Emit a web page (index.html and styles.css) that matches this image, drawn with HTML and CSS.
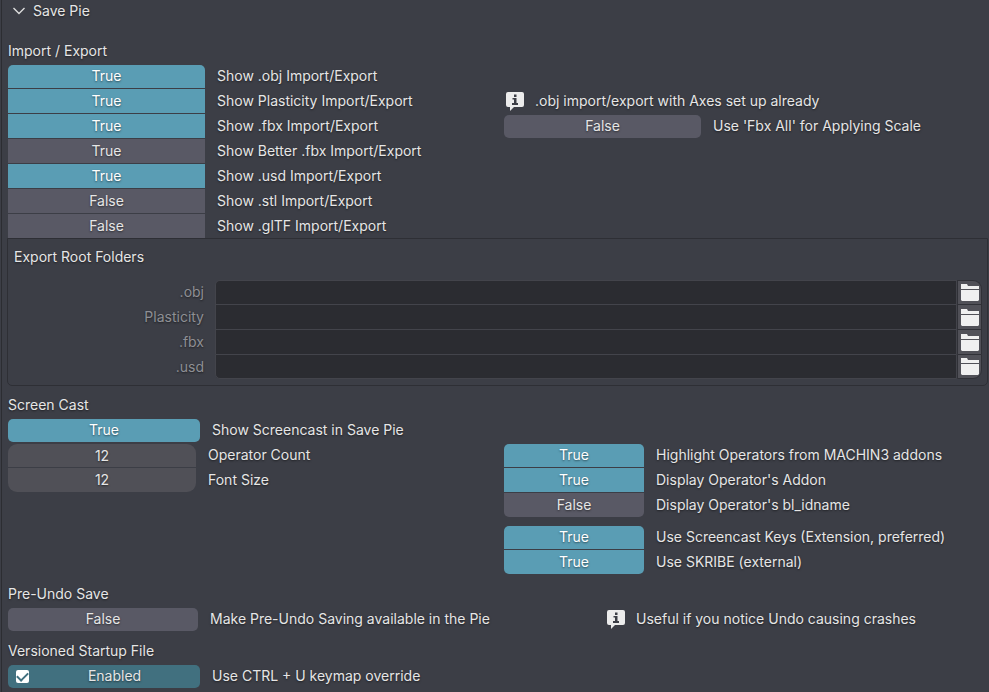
FILE: index.html
```html
<!DOCTYPE html>
<html lang="en">
<head>
<meta charset="utf-8">
<title>Save Pie</title>
<link rel="stylesheet" href="styles.css">
</head>
<body>
<svg class="defs" aria-hidden="true">
  <symbol id="info" viewBox="0 0 18 19">
    <path fill="#ececec" fill-rule="evenodd" d="M2 0H16Q18 0 18 2V13Q18 15 16 15H8L4 19V15H2Q0 15 0 13V2Q0 0 2 0ZM8 2.5V5H10.5V2.5ZM6.5 6V7.5H8V11H6V13H12V11H10.5V6Z"/>
  </symbol>
  <symbol id="folder" viewBox="0 0 18 17">
    <path fill="#f0f0f0" d="M0 0H6L7 2H18V5H0ZM0 6H18V16L17 17H1L0 16Z"/>
  </symbol>
</svg>
<main class="panel">
  <h1 class="title"><button class="fold" aria-expanded="true"><svg class="chevron" viewBox="0 0 12 8"><path d="M0.5 1L6 6.5L11.5 1" fill="none" stroke="#dcdcdc" stroke-width="1.4"/></svg>Save Pie</button></h1>

  <section class="imports">
    <h2>Import / Export</h2>
    <div class="columns">
      <div class="stack wide">
        <div class="row"><button class="toggle on" id="obj">True</button><label for="obj">Show .obj Import/Export</label></div>
        <div class="row"><button class="toggle on" id="plasticity">True</button><label for="plasticity">Show Plasticity Import/Export</label></div>
        <div class="row"><button class="toggle on" id="fbx">True</button><label for="fbx">Show .fbx Import/Export</label></div>
        <div class="row"><button class="toggle" id="better">True</button><label for="better">Show Better .fbx Import/Export</label></div>
        <div class="row"><button class="toggle on" id="usd">True</button><label for="usd">Show .usd Import/Export</label></div>
        <div class="row"><button class="toggle" id="stl">False</button><label for="stl">Show .stl Import/Export</label></div>
        <div class="row"><button class="toggle" id="gltf">False</button><label for="gltf">Show .glTF Import/Export</label></div>
      </div>
      <div class="side">
        <p class="note"><svg class="info"><use href="#info"/></svg>.obj import/export with Axes set up already</p>
        <div class="stack wide">
          <div class="row"><button class="toggle" id="fbxall">False</button><label for="fbxall">Use 'Fbx All' for Applying Scale</label></div>
        </div>
      </div>
    </div>
    <div class="box">
      <h3>Export Root Folders</h3>
      <div class="paths">
        <div class="path"><label for="pobj">.obj</label><input type="text" id="pobj"><button class="browse" aria-label="Browse"><svg><use href="#folder"/></svg></button></div>
        <div class="path"><label for="ppla">Plasticity</label><input type="text" id="ppla"><button class="browse" aria-label="Browse"><svg><use href="#folder"/></svg></button></div>
        <div class="path"><label for="pfbx">.fbx</label><input type="text" id="pfbx"><button class="browse" aria-label="Browse"><svg><use href="#folder"/></svg></button></div>
        <div class="path"><label for="pusd">.usd</label><input type="text" id="pusd"><button class="browse" aria-label="Browse"><svg><use href="#folder"/></svg></button></div>
      </div>
    </div>
  </section>

  <section>
    <h2>Screen Cast</h2>
    <div class="stack medium">
      <div class="row"><button class="toggle on" id="cast">True</button><label for="cast">Show Screencast in Save Pie</label></div>
    </div>
    <div class="columns">
      <div class="stack numbers">
        <div class="row"><input class="number" type="text" inputmode="numeric" id="count" value="12"><label for="count">Operator Count</label></div>
        <div class="row"><input class="number" type="text" inputmode="numeric" id="size" value="12"><label for="size">Font Size</label></div>
      </div>
      <div class="groups">
        <div class="stack narrow">
          <div class="row"><button class="toggle on" id="high">True</button><label for="high">Highlight Operators from MACHIN3 addons</label></div>
          <div class="row"><button class="toggle on" id="addon">True</button><label for="addon">Display Operator's Addon</label></div>
          <div class="row"><button class="toggle" id="idname">False</button><label for="idname">Display Operator's bl_idname</label></div>
        </div>
        <div class="stack narrow">
          <div class="row"><button class="toggle on" id="keys">True</button><label for="keys">Use Screencast Keys (Extension, preferred)</label></div>
          <div class="row"><button class="toggle on" id="skribe">True</button><label for="skribe">Use SKRIBE (external)</label></div>
        </div>
      </div>
    </div>
  </section>

  <section>
    <h2>Pre-Undo Save</h2>
    <div class="columns undo">
      <div class="stack preundo">
        <div class="row"><button class="toggle" id="undo">False</button><label for="undo">Make Pre-Undo Saving available in the Pie</label></div>
      </div>
      <p class="note"><svg class="info"><use href="#info"/></svg>Useful if you notice Undo causing crashes</p>
    </div>
  </section>

  <section>
    <h2>Versioned Startup File</h2>
    <div class="stack medium">
      <div class="row"><label class="enabled"><input type="checkbox" checked><span>Enabled</span></label><span class="text">Use CTRL + U keymap override</span></div>
    </div>
  </section>
</main>
</body>
</html>
```
FILE: styles.css
```css
* { box-sizing: border-box; }

body {
  margin: 0;
  background: #3c3e46;
  color: #e6e6e6;
  font: 14px/24px Inter, "Liberation Sans", sans-serif;
  text-shadow: 0 1px 2px rgba(0, 0, 0, .5);
}

button, input { font: inherit; color: inherit; text-shadow: inherit; border: 0; padding: 0; margin: 0; }
h1, h2, h3, p { margin: 0; font: inherit; }
label, .text, .note { white-space: nowrap; }
.defs { position: absolute; width: 0; height: 0; }

.panel {
  margin-left: 1px;
  padding: 0 1px 0 6px;
  border-left: 1px solid #2c2d32;
  min-height: 100vh;
}

.title { display: flex; align-items: flex-start; height: 39px; }
.fold { display: flex; align-items: center; gap: 8px; padding-left: 5px; height: 22px; background: none; }
.chevron { width: 12px; height: 8px; }

section { padding-bottom: 7px; }
section:last-child { padding-bottom: 2px; }
h2 { height: 25px; }

.columns { display: grid; grid-template-columns: 1fr 1fr; column-gap: 12px; }
.undo { grid-template-columns: 585fr 383fr; }
.side { padding-top: 25px; }

.row { display: grid; align-items: center; height: 25px; padding-bottom: 1px; }
.wide .row { grid-template-columns: 197fr 275fr; column-gap: 12px; }
.medium .row { grid-template-columns: 192fr 776fr; column-gap: 12px; }
.numbers .row { grid-template-columns: 188fr 284fr; column-gap: 12px; }
.narrow .row { grid-template-columns: 140fr 332fr; column-gap: 12px; }
.preundo .row { grid-template-columns: 190fr 383fr; column-gap: 12px; }
.row label, .row .text { min-width: 0; }

.toggle { height: 24px; background: #595965; }
.toggle.on { background: #5a9db4; color: #fff; }
.stack { --round: 5px; }
.stack .row:first-child > :first-child {
  height: 23px;
  line-height: 22px;
  padding-bottom: 1px;
  align-self: end;
  border-top-left-radius: var(--round);
  border-top-right-radius: var(--round);
}
.stack .row:last-child > :first-child { border-bottom-left-radius: var(--round); border-bottom-right-radius: var(--round); }
.imports > .columns > .stack .row:last-child > :first-child { border-radius: 0; }

.numbers { --round: 9px; }
.number { width: 100%; height: 24px; background: #505057; text-align: center; }
.groups { display: grid; row-gap: 7px; }

.note { display: flex; align-items: center; gap: 11px; height: 25px; padding: 0 0 1px 2px; }
.info { width: 18px; height: 19px; flex: none; }

.box { margin: -1px 0 0 -1px; padding: 6px 5px 6px 6px; border: 1px solid #2e2f35; border-radius: 0 0 5px 5px; }
h3 { height: 35px; }
.path { display: grid; grid-template-columns: 190fr 753fr 25px; align-items: center; height: 25px; }
.path:first-child { height: 24px; }
.path label { text-align: right; color: #8e8f94; }
.path input { margin-left: 11px; height: 100%; border: 1px solid #43444b; border-bottom: 0; background: #2b2c31; min-width: 0; }
.path:first-child input { border-top-left-radius: 5px; }
.path:last-child input { border-bottom: 1px solid #43444b; border-bottom-left-radius: 5px; }
.browse { display: grid; place-items: center; height: 100%; background: #515158; border: 1px solid #303137; border-bottom: 0; }
.path:first-child .browse { border-top-right-radius: 9px; }
.path:last-child .browse { border-bottom: 1px solid #303137; border-bottom-right-radius: 9px; }
.browse svg { width: 18px; height: 17px; }

.enabled { display: flex; align-items: center; height: 24px; padding-left: 8px; background: #41707f; }
.enabled span { flex: 1; text-align: center; }
.enabled input {
  appearance: none;
  width: 13px;
  height: 13px;
  border-radius: 2px;
  background: #fff;
  display: grid;
  place-items: center;
}
.enabled input::before {
  content: "";
  width: 9px;
  height: 5px;
  margin-bottom: 2px;
  border: solid #41707f;
  border-width: 0 0 2px 2px;
  transform: rotate(-45deg);
}
```
